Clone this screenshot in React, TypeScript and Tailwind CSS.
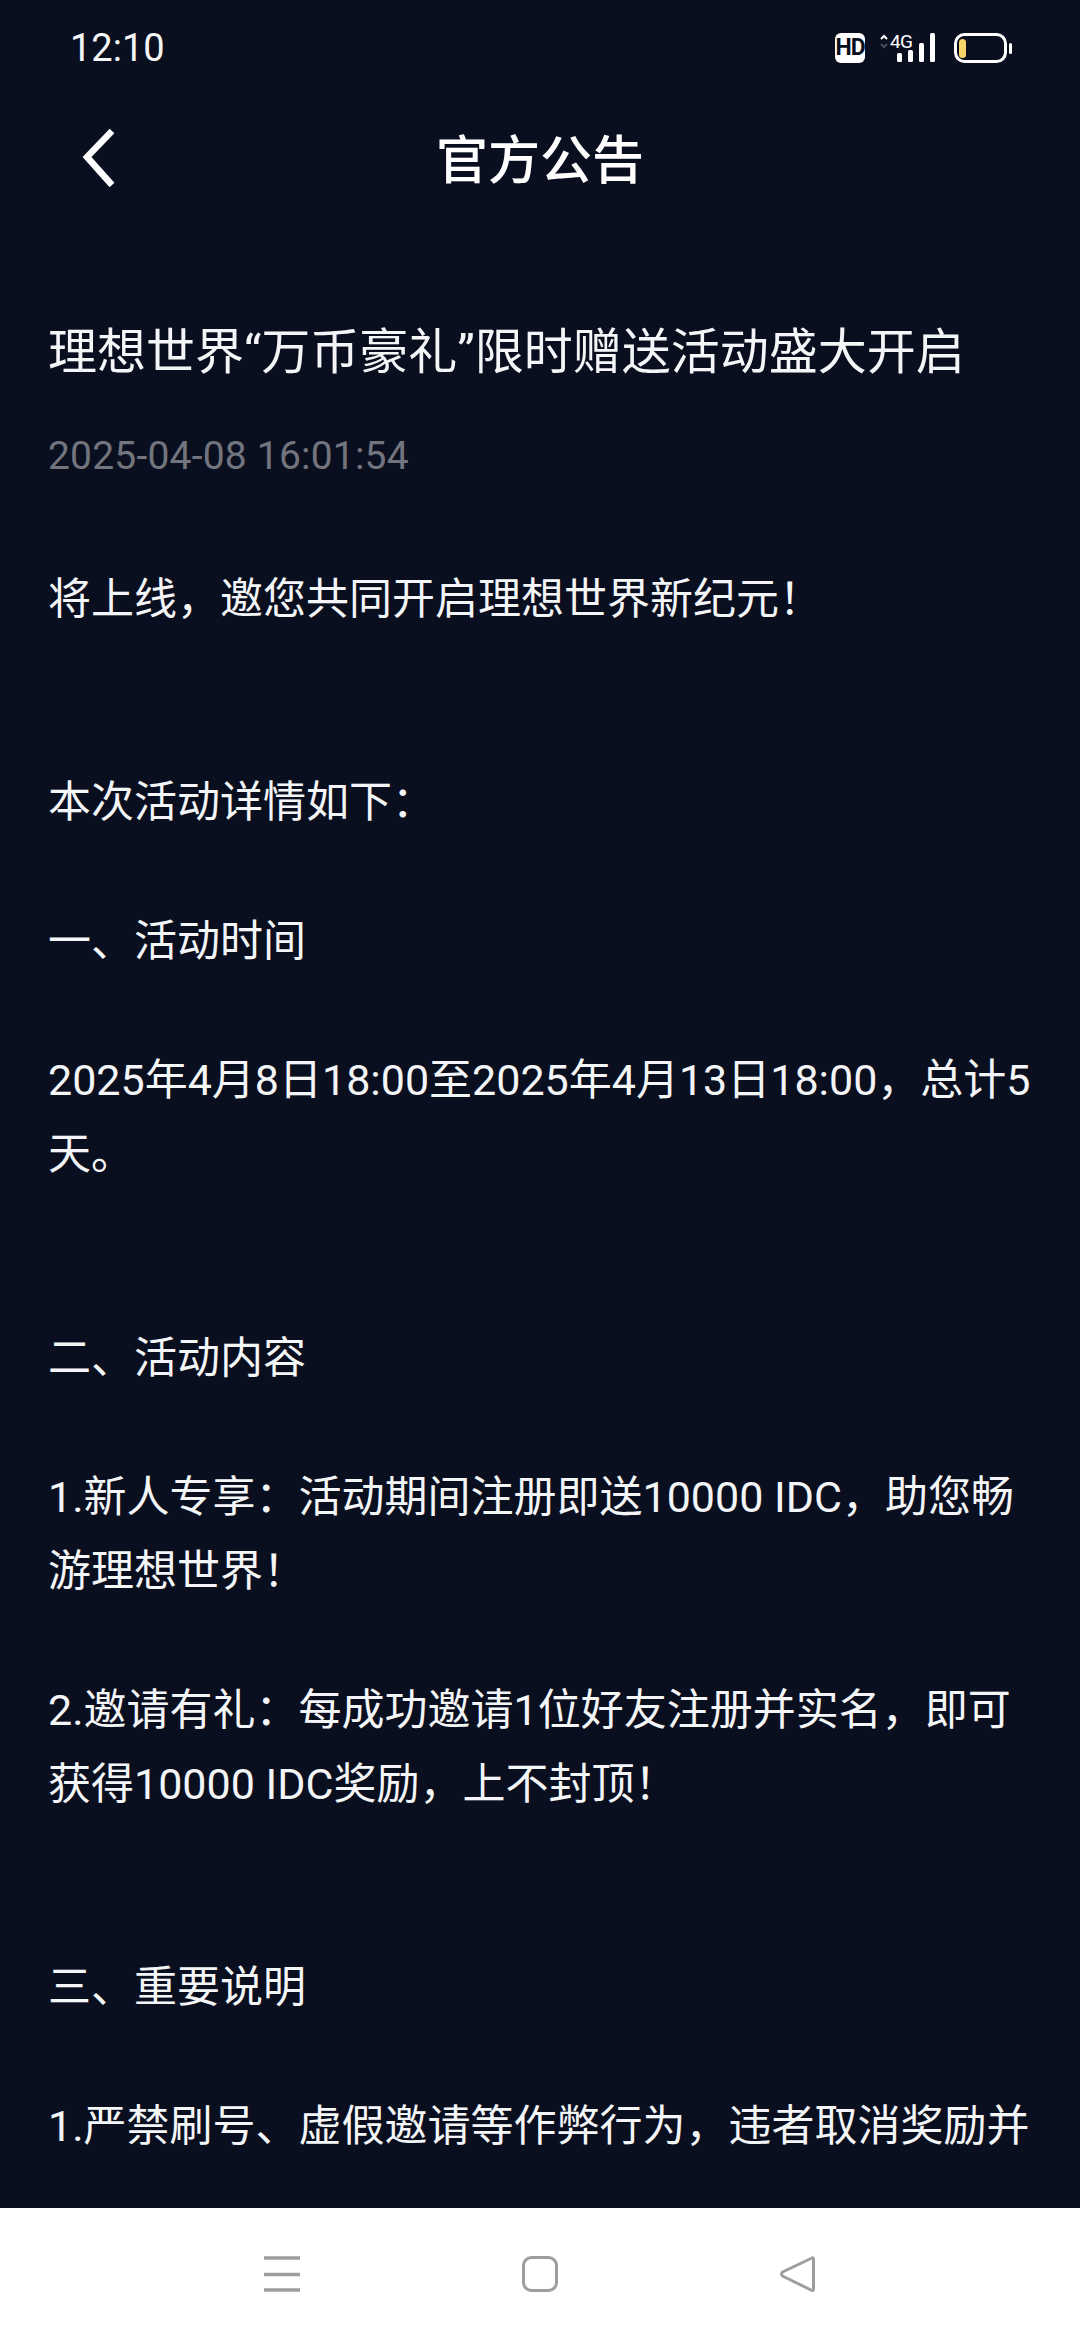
const font = { fontFamily: '"Roboto", "Noto Sans CJK SC", sans-serif' };

const paragraphs: { text: string; gap: string }[] = [
  { text: "将上线，邀您共同开启理想世界新纪元！", gap: "mb-[129px]" },
  { text: "本次活动详情如下：", gap: "mb-[65px]" },
  { text: "一、活动时间", gap: "mb-[65px]" },
  { text: "2025年4月8日18:00至2025年4月13日18:00，总计5天。", gap: "mb-[130px]" },
  { text: "二、活动内容", gap: "mb-[65px]" },
  { text: "1.新人专享：活动期间注册即送10000 IDC，助您畅游理想世界！", gap: "mb-[65px]" },
  { text: "2.邀请有礼：每成功邀请1位好友注册并实名，即可获得10000 IDC奖励，上不封顶！", gap: "mb-[129px]" },
  { text: "三、重要说明", gap: "mb-[65px]" },
  { text: "1.严禁刷号、虚假邀请等作弊行为，违者取消奖励并", gap: "mb-[65px]" },
];

function StatusIcons() {
  return (
    <div className="flex items-start">
      <div className="flex h-[30px] w-[30px] items-center justify-center rounded-[6px] bg-white text-[23px] font-bold tracking-[-1px] text-[#080e20]">
        HD
      </div>
      <svg width="58" height="38" viewBox="0 -8 58 38" className="ml-[14px] mt-[-8px]">
        <path d="M2 6l3-3 3 3" fill="none" stroke="#ffffff" strokeWidth="2" />
        <path d="M2 11l3 3 3-3" fill="none" stroke="#4a4f60" strokeWidth="2" />
        <text x="11" y="15" fill="#ffffff" fontSize="19" fontFamily="Roboto, sans-serif" textLength="23">4G</text>
        <rect x="18" y="20" width="5" height="9" rx="1.5" fill="#fff" />
        <rect x="29" y="17" width="5" height="12" rx="1.5" fill="#fff" />
        <rect x="40" y="10" width="5" height="19" rx="1.5" fill="#fff" />
        <rect x="51" y="0" width="5" height="29" rx="1.5" fill="#fff" />
      </svg>
      <svg width="58" height="30" viewBox="0 0 58 30" className="ml-[17px]">
        <rect x="1.5" y="1.5" width="50" height="27" rx="9" fill="none" stroke="#fff" strokeWidth="3" />
        <rect x="5" y="6" width="7" height="19" rx="3.5" fill="#f6d468" />
        <rect x="55" y="10" width="3" height="11" rx="1.5" fill="#fff" />
      </svg>
    </div>
  );
}

export default function App() {
  return (
    <div className="flex h-[2340px] w-[1080px] flex-col overflow-hidden bg-[#0a0f20] text-white" style={font}>
      <div className="flex h-[2208px] flex-col overflow-hidden">
        <div className="flex h-[94px] shrink-0 items-start justify-between pl-[70px] pr-[68px] pt-[26px]">
          <span className="text-[38px] leading-[44px] text-[#f5f6f8]">12:10</span>
          <div className="pt-[7px]"><StatusIcons /></div>
        </div>
        <div className="relative flex h-[130px] shrink-0 items-center justify-center pt-[6px]">
          <svg width="38" height="68" viewBox="0 0 38 68" className="absolute left-[79px] top-[33px]">
            <path d="M33 4L8 30L33 58" fill="none" stroke="#fff" strokeWidth="6.5" />
          </svg>
          <h1 className="text-[52px] font-medium leading-[64px]">官方公告</h1>
        </div>
        <div className="pl-[48px] pr-[40px] pt-[97px]">
          <h2 className="text-[49px] leading-[64px] text-[#f4f5f7]">理想世界“万币豪礼”限时赠送活动盛大开启</h2>
          <p className="mt-[46px] text-[39px] tracking-[0.2px] leading-[50px] text-[#72757e]">2025-04-08 16:01:54</p>
          <div className="mt-[81px] text-[43px] leading-[74px] text-[#f4f5f7]">
            {paragraphs.map((p) => (
              <p key={p.text} className={p.gap}>{p.text}</p>
            ))}
          </div>
        </div>
      </div>
      <div className="flex h-[132px] shrink-0 items-start bg-white pl-[264px] pt-[48px]">
        <svg width="37" height="36" viewBox="0 0 37 36">
          <path d="M0 2H36M0 18.5H36M0 34H36" stroke="#9e9e9e" strokeWidth="3.5" fill="none" />
        </svg>
        <svg width="37" height="36" viewBox="0 0 37 36" className="ml-[221px]">
          <rect x="1.5" y="1.5" width="33" height="33" rx="8" fill="none" stroke="#9e9e9e" strokeWidth="3" />
        </svg>
        <svg width="36" height="36" viewBox="0 0 36 36" className="ml-[221px]">
          <path d="M32 2L2.5 16Q0.5 18 2.5 20L32 34.5Q33.5 35 33.5 33V3Q33.5 1.5 32 2Z" fill="none" stroke="#9e9e9e" strokeWidth="3" strokeLinejoin="round" />
        </svg>
      </div>
    </div>
  );
}
